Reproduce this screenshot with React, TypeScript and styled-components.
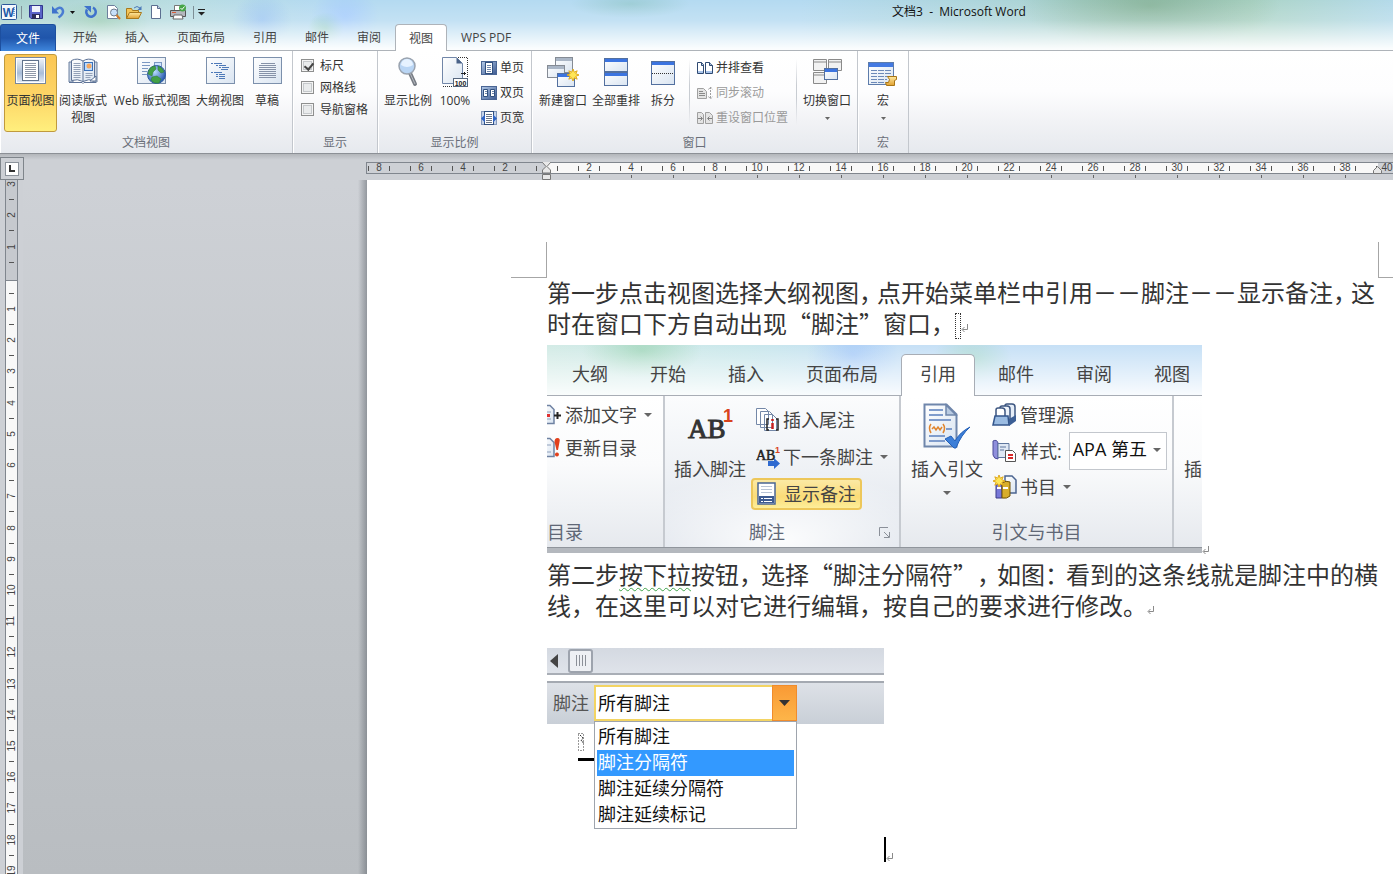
import React from "react";
import styled, { createGlobalStyle, css } from "styled-components";

const Global = createGlobalStyle`
  * { box-sizing: border-box; }
  html, body { margin: 0; height: 100%; overflow: hidden; }
  body {
    font-family: "Open Sans", "Noto Sans CJK SC", sans-serif;
    font-size: 12px;
    line-height: 17px;
    color: #333;
  }
  button, select, input { font: inherit; color: inherit; margin: 0; }
  button { border: 0; background: none; padding: 0; white-space: nowrap; }
  ul { margin: 0; padding: 0; list-style: none; }
  p { margin: 0; }
  svg { display: block; flex: none; }
`;

/* ---------- window frame ---------- */

const Window = styled.div`
  height: 100vh;
  display: flex;
  flex-direction: column;
  overflow: hidden;
`;

const Header = styled.header`
  background:
    linear-gradient(to bottom, rgba(255, 255, 255, 0) 0, rgba(255, 255, 255, 0.2) 40%, rgba(255, 255, 255, 0.95) 96%),
    radial-gradient(ellipse 50px 22px at 100px 22px, rgba(140, 196, 160, 0.6), transparent),
    radial-gradient(ellipse 30px 26px at 262px 20px, rgba(140, 185, 245, 0.6), transparent),
    radial-gradient(ellipse 34px 28px at 345px 16px, rgba(160, 200, 255, 0.8), transparent),
    radial-gradient(ellipse 18px 16px at 326px 28px, rgba(130, 200, 150, 0.6), transparent),
    radial-gradient(ellipse 60px 14px at 630px 4px, rgba(140, 195, 195, 0.6), transparent),
    radial-gradient(ellipse 130px 44px at 1150px 6px, rgba(134, 178, 152, 0.9), transparent),
    linear-gradient(to right, #a8d2cd 0, #b9dde2 180px, #b4daf1 320px, #b4daf1 800px, #a9d2cf 1080px, #acd4c6 1250px, #b4daea 100%);
`;

const TitleBar = styled.div`
  height: 24px;
  display: flex;
  align-items: center;
`;

const QuickBar = styled.div`
  display: flex;
  align-items: center;
  padding-left: 1px;
`;

const QuickButton = styled.button<{ $w?: number }>`
  width: ${(p) => p.$w ?? 22}px;
  height: 22px;
  display: flex;
  align-items: center;
  justify-content: center;
`;

const QuickDivider = styled.span`
  width: 1px;
  height: 13px;
  margin: 0 3px;
  background: #7d8f96;
`;

const Title = styled.h1`
  flex: 1;
  margin: 0;
  padding-left: 320px;
  font-size: 12px;
  font-weight: 400;
  line-height: 24px;
  text-align: center;
  color: #111;
`;

const Tabs = styled.nav`
  display: flex;
  height: 27px;
  box-shadow: inset 0 -1px #aeb3b9;
`;

const Tab = styled.button<{ $active?: boolean }>`
  height: 27px;
  padding: 0 14px;
  color: #444;
  ${(p) =>
    p.$active &&
    css`
      padding: 0 13px;
      background: #fff;
      border: 1px solid #aeb3b9;
      border-bottom: 0;
      border-radius: 4px 4px 0 0;
    `}
`;

const FileTab = styled.button`
  width: 56px;
  height: 27px;
  margin-right: 3px;
  color: #fff;
  border: 1px solid #1d4f9f;
  border-bottom: 0;
  border-radius: 3px 3px 0 0;
  background: linear-gradient(#2a62b4, #1f55ab 50%, #3f86dc);
`;

/* ---------- ribbon ---------- */

const Ribbon = styled.div`
  display: flex;
  height: 103px;
  background: linear-gradient(#fff 0, #fdfdfe 40%, #f1f2f5 70%, #e6e9ee);
  border-bottom: 1px solid #8c9096;
`;

const Group = styled.section<{ $w: number }>`
  width: ${(p) => p.$w}px;
  flex: none;
  display: flex;
  flex-direction: column;
  border-right: 1px solid #c3c7cd;
  box-shadow: inset 1px 0 #fff;
`;

const GroupBody = styled.div<{ $pl?: number }>`
  flex: 1;
  display: flex;
  padding: 3px 0 0 ${(p) => p.$pl ?? 4}px;
`;

const GroupLabel = styled.div`
  height: 20px;
  line-height: 20px;
  text-align: center;
  color: #6a6f79;
`;

const BigButton = styled.button<{ $w?: number; $active?: boolean }>`
  width: ${(p) => p.$w ?? 52}px;
  height: 78px;
  flex: none;
  display: flex;
  flex-direction: column;
  align-items: center;
  border-radius: 3px;
  border: 1px solid transparent;
  > svg { margin-top: 8px; }
  ${(p) =>
    p.$active &&
    css`
      border-color: #c09a3e;
      background: linear-gradient(#fbc653 0, #fdd567 55%, #ffef7d);
    `}
`;

const IconBox = styled.span`
  height: 37px;
  padding-top: 2px;
  display: flex;
  align-items: flex-start;
  justify-content: center;
`;

const SmallList = styled.div<{ $pt?: number }>`
  display: flex;
  flex-direction: column;
  padding: ${(p) => p.$pt ?? 1}px 0 0 5px;
`;

const SmallButton = styled.button`
  height: 25px;
  display: flex;
  align-items: center;
  gap: 3px;
  &:disabled { color: #9a9a9a; }
`;

const Divider = styled.span<{ $m: string }>`
  width: 1px;
  height: 66px;
  margin: ${(p) => p.$m};
  background: linear-gradient(transparent, #c8ccd2 40%, #c8ccd2 60%, transparent);
`;

const CheckRow = styled.label`
  display: flex;
  align-items: center;
  gap: 6px;
  height: 22px;
`;

const Check = styled.input`
  appearance: none;
  position: relative;
  width: 13px;
  height: 13px;
  border: 1px solid #8e8f8f;
  box-shadow: inset 0 0 0 1px #f4f4f4, inset 0 0 0 2px #c5c8cb;
  background: #e9ebec;
  &:checked::after {
    content: "";
    position: absolute;
    left: 4px;
    top: 1px;
    width: 4px;
    height: 7px;
    border: solid #444;
    border-width: 0 2px 2px 0;
    transform: rotate(40deg);
  }
`;

/* ---------- rulers and canvas ---------- */

const Workspace = styled.main`
  flex: 1;
  min-height: 0;
  display: flex;
  flex-direction: column;
  background: linear-gradient(#cfd2d7, #c3c7cb 50%, #b9bdc1);
`;

const RulerRow = styled.div`
  height: 26px;
  flex: none;
  display: flex;
  background: linear-gradient(#b3b6ba 0, #cdd0d5 6px);
`;

const Corner = styled.button`
  width: 24px;
  height: 23px;
  margin-top: 3px;
  flex: none;
  display: flex;
  align-items: center;
  justify-content: center;
  border: 1px solid #7f858b;
  background: #cdd0d5;
`;

const CornerFace = styled.span`
  width: 14px;
  height: 14px;
  display: flex;
  align-items: center;
  justify-content: center;
  border: 1px solid #8c939b;
  background: #fff;
`;

const HRuler = styled.div`
  position: relative;
  flex: 1;
  margin: 8px 0 0 342px;
  overflow: hidden;
`;

const HTrack = styled.div`
  display: flex;
  height: 12px;
  border: 1px solid #80868e;
  border-right: 0;
`;

const HZone = styled.span<{ $w?: number }>`
  flex: ${(p) => (p.$w ? `0 0 ${p.$w}px` : "1")};
  background: ${(p) => (p.$w && p.$w > 200 ? "#f8f8f8" : "#cdd0d5")};
`;

const HScale = styled.div`
  position: absolute;
  left: -8px;
  top: 0;
  display: flex;
`;

const HCell = styled.span<{ $sub?: boolean }>`
  position: relative;
  width: 42px;
  flex: none;
  height: 18px;
  display: grid;
  grid-template-columns: 10px 1px 20px 1px 10px;
  font: 10px/12px "Liberation Sans", sans-serif;
  text-align: center;
  color: #444;
  i { height: 5px; margin-top: 4px; background: #555; }
  b { font-weight: 400; }
  &::after {
    content: "";
    position: absolute;
    left: 21px;
    top: 13px;
    width: 1px;
    height: 3px;
    background: ${(p) => (p.$sub ? "#666" : "transparent")};
  }
`;

const Marker = styled.span<{ $x: number; $y: number }>`
  position: absolute;
  left: ${(p) => p.$x}px;
  top: ${(p) => p.$y}px;
`;

const Body = styled.div`
  flex: 1;
  min-height: 0;
  display: flex;
`;

const VRuler = styled.div`
  width: 23px;
  flex: none;
  padding-left: 5px;
  overflow: hidden;
  background: #cdd0d5;
`;

const VTrack = styled.div`
  width: 13px;
  height: 100%;
  overflow: hidden;
  border: solid #80868e;
  border-width: 0 1px;
  background: linear-gradient(#c6c9ce 100px, #80868e 100px, #80868e 101px, #f8f8f8 101px);
`;

const VScale = styled.div`
  height: 718px;
  margin-top: -11px;
  display: flex;
  flex-direction: column;
`;

const VCell = styled.span`
  flex: 1;
  display: flex;
  flex-direction: column;
  align-items: center;
  font: 10px/12px "Liberation Sans", sans-serif;
  color: #444;
  b {
    flex: 1;
    display: flex;
    align-items: center;
    font-weight: 400;
  }
  b span { transform: rotate(-90deg); }
  i { width: 5px; height: 1px; flex: none; background: #555; }
`;

const PageEdge = styled.div`
  flex: 1;
  min-width: 0;
  padding-left: 344px;
  background: linear-gradient(to right, transparent 335px, rgba(90, 96, 104, 0.5) 344px) no-repeat;
`;

const Page = styled.article`
  height: 100%;
  padding-top: 62px;
  overflow: hidden;
  background: #fff;
`;

const CropRow = styled.div`
  display: flex;
  gap: 831px;
  height: 34px;
  margin-left: 144px;
`;

const Crop = styled.span<{ $side: "left" | "right" }>`
  width: 36px;
  height: 36px;
  flex: none;
  border: solid #a6a6a6;
  border-width: ${(p) => (p.$side === "left" ? "0 1px 1px 0" : "0 0 1px 1px")};
`;

const TextColumn = styled.div`
  width: 840px;
  margin-left: 180px;
`;

const Para = styled.p`
  font: 24px/31px "Noto Sans CJK SC", sans-serif;
  text-spacing-trim: space-all;
  white-space: nowrap;
  color: #333;
`;

/* half-width punctuation followed by its own share of the line's slack */
const Tight = styled.span<{ $pad: number }>`
  font-feature-settings: "halt";
  padding-right: ${(p) => p.$pad}px;
`;

const Wavy = styled.span`
  text-decoration: underline wavy #3fa34a 1px;
  text-underline-offset: 3px;
`;

const NoteRef = styled.span`
  display: inline-block;
  width: 6px;
  height: 26px;
  vertical-align: middle;
  border: 1px dotted #333;
`;

const Mark = styled.svg`
  display: inline-block;
`;

/* ---------- first picture: references ribbon ---------- */

const Shot = styled.figure`
  width: 655px;
  height: 208px;
  margin: 6px 0 5px;
  display: flex;
  font-size: 18px;
  line-height: 24px;
  color: #444;
`;

const ShotFrame = styled.div`
  width: 655px;
  flex: none;
  overflow: hidden;
  border-bottom: 5px solid #b4b8be;
`;

const ShotEnd = styled.span`
  align-self: flex-end;
  line-height: 10px;
  height: 10px;
`;

const ShotTabs = styled.div`
  height: 51px;
  padding: 9px 0 0 4px;
  display: flex;
  background:
    linear-gradient(to bottom, rgba(255, 255, 255, 0) 0, rgba(255, 255, 255, 0.9)),
    radial-gradient(ellipse 60px 28px at 95px 6px, rgba(140, 205, 165, 0.6), transparent),
    radial-gradient(ellipse 46px 36px at 306px 10px, rgba(150, 190, 250, 0.6), transparent),
    radial-gradient(ellipse 40px 26px at 425px 14px, rgba(160, 215, 190, 0.6), transparent),
    linear-gradient(to right, #d3ebe6 0, #cbe8ec 200px, #c6e0f6 340px, #c6e0f6 100%);
  box-shadow: inset 0 -1px #a8adb5;
`;

const ShotTab = styled.button<{ $active?: boolean }>`
  height: 42px;
  padding: 0 21px 3px;
  flex: none;
  ${(p) =>
    p.$active &&
    css`
      margin: 0 2px;
      padding: 0 18px 4px;
      background: #fff;
      border: 1px solid #a8adb5;
      border-bottom: 0;
      border-radius: 5px 5px 0 0;
    `}
`;

const ShotRibbon = styled.div`
  height: 152px;
  display: flex;
  background: linear-gradient(#fff, #fafbfc 45%, #e6e9ee);
  border-bottom: 1px solid #90959c;
`;

const ShotGroup = styled.section<{ $w: number; $tint?: boolean }>`
  width: ${(p) => p.$w}px;
  flex: none;
  display: flex;
  flex-direction: column;
  border-right: 2px solid #c6cad0;
  ${(p) =>
    p.$tint &&
    css`
      background: radial-gradient(ellipse 160px 70px at 50% 95%, rgba(255, 255, 255, 0.9), transparent),
        linear-gradient(#fbfcfd, #eef1f5 50%, #dfe4ec);
    `}
`;

const ShotBody = styled.div<{ $pl?: number }>`
  height: 124px;
  display: flex;
  padding-left: ${(p) => p.$pl ?? 0}px;
`;

const ShotLabel = styled.div<{ $start?: boolean; $pr?: number }>`
  position: relative;
  padding-right: ${(p) => p.$pr ?? 0}px;
  text-align: ${(p) => (p.$start ? "left" : "center")};
  color: #606776;
`;

const Launcher = styled.button`
  position: absolute;
  right: 8px;
  top: 7px;
`;

const ShotBig = styled.button<{ $w: number }>`
  width: ${(p) => p.$w}px;
  flex: none;
  padding-top: 7px;
  display: flex;
  flex-direction: column;
  align-items: center;
  > svg { margin-top: 10px; }
`;

const ShotIcon = styled.span`
  height: 54px;
`;

const ShotList = styled.div<{ $row: number; $pt: number; $pl?: number }>`
  padding: ${(p) => p.$pt}px 0 0 ${(p) => p.$pl ?? 0}px;
  display: grid;
  align-content: start;
  justify-items: start;
  grid-auto-rows: ${(p) => p.$row}px;
`;

const ShotItem = styled.button<{ $active?: boolean }>`
  height: 32px;
  align-self: center;
  display: flex;
  align-items: center;
  gap: 3px;
  padding: 0 3px;
  border: 2px solid transparent;
  border-radius: 4px;
  > svg:last-child:not(:first-child) { margin-left: 4px; }
  ${(p) =>
    p.$active &&
    css`
      gap: 7px;
      padding: 0 4px;
      border-color: #edc75a;
      background: linear-gradient(#fbe9a4, #fbdc78 60%, #fdee9a);
    `}
`;

const ClipItem = styled.button`
  height: 32px;
  display: flex;
  align-items: center;
  gap: 4px;
  svg:last-child:not(:first-child) { margin-left: 3px; }
`;

const StyleField = styled.label`
  display: flex;
  align-items: center;
  gap: 4px;
  height: 36px;
  padding-left: 5px;
  white-space: nowrap;
`;

const StyleWrap = styled.span`
  position: relative;
  margin-left: 3px;
  svg { position: absolute; right: 6px; top: 16px; }
`;

const StyleSelect = styled.select`
  appearance: none;
  display: block;
  width: 98px;
  height: 38px;
  padding: 0 16px 4px 3px;
  border: 1px solid #c3c7cd;
  border-radius: 0;
  background: #fff;
  color: #111;
`;

/* ---------- second picture: footnote pane ---------- */

const PaneRow = styled.div`
  display: flex;
  align-items: flex-end;
  margin-top: 28px;
`;

const Pane = styled.figure`
  width: 337px;
  height: 214px;
  margin: 0;
  font-size: 18px;
  line-height: 24px;
`;

const ScrollStrip = styled.div`
  height: 27px;
  display: flex;
  align-items: center;
  gap: 10px;
  padding-left: 3px;
  background: linear-gradient(#d4d9e1, #dfe3ea);
  border-bottom: 2px solid #a9aeb6;
`;

const Thumb = styled.button`
  width: 25px;
  height: 24px;
  display: flex;
  align-items: center;
  justify-content: center;
  gap: 2px;
  border: 2px solid #9da3ad;
  border-radius: 3px;
  background: #eef0f4;
  i { width: 1px; height: 11px; background: #8c9098; }
`;

const PaneBar = styled.div`
  height: 43px;
  margin-top: 6px;
  padding: 2px 0 0 6px;
  display: flex;
  gap: 5px;
  border-top: 2px solid #a4a9b1;
  background: linear-gradient(#dde1e7, #c9cfd7);
`;

const PaneLabel = styled.label`
  line-height: 36px;
  color: #555;
`;

const Combo = styled.div`
  position: relative;
  width: 203px;
`;

const ComboSelect = styled.select`
  appearance: none;
  display: block;
  width: 203px;
  height: 36px;
  padding: 0 28px 0 2px;
  border: 2px solid #f3d463;
  border-radius: 0;
  color: #111;
  background: #fff;
`;

const ComboArrow = styled.span`
  position: absolute;
  right: 0;
  top: 0;
  width: 25px;
  height: 36px;
  display: flex;
  align-items: center;
  justify-content: center;
  border: 1px solid #f08c2c;
  background: linear-gradient(#f99a35, #fdb549);
`;

const Menu = styled.ul`
  position: absolute;
  left: 0;
  top: 36px;
  width: 203px;
  padding: 2px 2px 0;
  border: 1px solid #9ea4ad;
  background: #fff;
  color: #111;
`;

const MenuItem = styled.li<{ $selected?: boolean }>`
  height: 26px;
  padding-left: 1px;
  line-height: 25px;
  background: ${(p) => (p.$selected ? "#3399ff" : "transparent")};
  color: ${(p) => (p.$selected ? "#fff" : "inherit")};
`;

const PaneText = styled.div`
  padding: 9px 0 0 31px;
`;

const Separator = styled.div`
  width: 16px;
  height: 3px;
  margin-top: 7px;
  background: #000;
`;

const Caret = styled.span`
  width: 2px;
  height: 25px;
  background: #000;
`;

/* ---------- icons ---------- */

const Arrow = ({ size = 5, color = "#666" }: { size?: number; color?: string }) => (
  <svg width={size} height={Math.ceil(size / 2)} viewBox="0 0 10 5" preserveAspectRatio="none">
    <path d="M0 0h10L5 5z" fill={color} />
  </svg>
);

const ParaMark = () => (
  <Mark width="8" height="9" viewBox="0 0 8 9" fill="none" stroke="#8a8a8a">
    <path d="M6.500 0v5.500H1.500M3.500 3L1 5.500 3.500 8" />
  </Mark>
);

const HiddenSvg = styled.svg`
  position: absolute;
`;

const Defs = () => (
  <HiddenSvg width="0" height="0">
    <defs>
      <linearGradient id="paper" x1="0" y1="0" x2="1" y2="1">
        <stop offset="0" stopColor="#fff" />
        <stop offset="1" stopColor="#d9e4f1" />
      </linearGradient>
      <linearGradient id="steel" x1="0" y1="0" x2="1" y2="1">
        <stop offset="0" stopColor="#b4cae8" />
        <stop offset="1" stopColor="#3a5890" />
      </linearGradient>
      <linearGradient id="gold" x1="0" y1="0" x2="0" y2="1">
        <stop offset="0" stopColor="#ffe9a0" />
        <stop offset="1" stopColor="#e0a030" />
      </linearGradient>
      <linearGradient id="frame" x1="0" y1="0" x2="0" y2="1">
        <stop offset="0" stopColor="#f4f7fb" />
        <stop offset=".6" stopColor="#a9bdd8" />
        <stop offset="1" stopColor="#e8eff8" />
      </linearGradient>
      <radialGradient id="globe" cx=".4" cy=".35" r=".7">
        <stop offset="0" stopColor="#b8dcff" />
        <stop offset="1" stopColor="#1c4fa8" />
      </radialGradient>
    </defs>
  </HiddenSvg>
);

const PrintLayoutIcon = () => (
  <svg width="31" height="28" viewBox="0 0 31 28">
    <rect x=".5" y=".5" width="30" height="26" fill="url(#frame)" stroke="#7788a0" />
    <rect x="1.500" y="1.500" width="28" height="24" fill="none" stroke="#fff" />
    <rect x="7.500" y="3.500" width="16" height="20" fill="#fff" stroke="#60728c" />
    <path d="M10 6.500h11M10 8.500h11M10 10.500h11M10 12.500h11M10 14.500h11M10 16.500h11M10 18.500h11M10 20.500h11" stroke="#8f98a8" />
  </svg>
);

const ReadingIcon = () => (
  <svg width="30" height="28" viewBox="0 0 30 28">
    <path d="M1 5h4v20H1zM25 5h4v20h-4z" fill="#cdd8e6" stroke="#6c80a0" />
    <path d="M3.500 3.500q6-3 11.500.500 5-3.500 11.500-.500v20q-6-2-11.500 1-5.500-3-11.500-1z" fill="url(#paper)" stroke="#5d7296" />
    <path d="M15 4v21" stroke="#5d7296" />
    <path d="M5.500 6.500h7M5.500 8.500h7M5.500 10.500h7M5.500 12.500h7M5.500 14.500h7M5.500 16.500h7M5.500 18.500h7M5.500 20.500h7M17.500 16.500h7M17.500 18.500h7M17.500 20.500h5" stroke="#93a1b8" />
    <rect x="16.500" y="5.500" width="8" height="8" fill="#bcdcff" stroke="#3b70b8" />
    <circle cx="21" cy="9" r="2.500" fill="#f5a860" />
    <path d="M1 25.500h13l1 1 1-1h12" fill="none" stroke="#5d7296" />
    <path d="M22 24l6-5v5z" fill="#fff" stroke="#5d7296" />
  </svg>
);

const WebIcon = () => (
  <svg width="30" height="29" viewBox="0 0 30 29">
    <rect x=".5" y=".5" width="28" height="26" fill="url(#paper)" stroke="#7c90ac" />
    <path d="M5 5.500h8M5 8.500h8M5 11.500h6M5 14.500h5M5 17.500h5" stroke="#7b98c2" />
    <rect x="17.500" y="5.500" width="7" height="5" fill="#cfe4ff" stroke="#7b98c2" />
    <circle cx="19.500" cy="17.500" r="9" fill="url(#globe)" stroke="#2c5aa0" />
    <path d="M12 13q2-4 6-4l1 3-3 3-1 4-4-2zM21 9q5 2 6 6l-3 1-3-3zM15 20l5-1 4 3-2 4q-5 1-8-3z" fill="#43a047" stroke="#2e7d32" strokeWidth=".5" />
  </svg>
);

const OutlineIcon = () => (
  <svg width="29" height="28" viewBox="0 0 29 28">
    <rect x=".5" y=".5" width="28" height="26" fill="url(#paper)" stroke="#7c90ac" />
    <path d="M5 6.500h2M8 6.500h8M10 8.500h2M13 8.500h7M13 10.500h2M16 10.500h7M15 12.500h7M5 15.500h2M8 15.500h8M10 17.500h2M13 17.500h6M10 19.500h2M13 19.500h6M13 21.500h6" stroke="#4d79b8" />
  </svg>
);

const DraftIcon = () => (
  <svg width="29" height="28" viewBox="0 0 29 28">
    <rect x=".5" y=".5" width="28" height="26" fill="url(#paper)" stroke="#7c90ac" />
    <path d="M8 6.500h14M6 8.500h17M6 10.500h17M6 12.500h17M6 14.500h17M6 16.500h17M6 18.500h17M6 20.500h17" stroke="#8692a8" />
  </svg>
);

const MagnifierIcon = () => (
  <svg width="21" height="30" viewBox="0 0 21 30">
    <path d="M12 16l5 11" stroke="#777c84" strokeWidth="4" strokeLinecap="round" />
    <path d="M12 16l5 11" stroke="#b5b9c0" strokeWidth="1" />
    <circle cx="9" cy="9" r="8" fill="#b9d5f4" stroke="#9aa3af" strokeWidth="1.500" />
    <path d="M3 8a6 6 0 0 1 12 0q-6 4-12 0z" fill="#e6f2ff" />
  </svg>
);

const HundredIcon = () => (
  <svg width="26" height="31" viewBox="0 0 26 31">
    <path d="M.5.5h14l6 6v20H.5z" fill="url(#paper)" stroke="#7186a8" />
    <path d="M14.500.5v6h6z" fill="#4a6288" />
    <path d="M16 .5h9.500V22M1 29.500h10" fill="none" stroke="#333" strokeDasharray="1 1" />
    <path d="M19 16.500h5M22.500 15v3" stroke="#222" />
    <rect x="11.500" y="21.500" width="14" height="8" fill="#fff" stroke="#56667e" />
    <text x="18.500" y="28.500" fontSize="7" fontWeight="700" textAnchor="middle" fill="#222" fontFamily="Liberation Sans">100</text>
  </svg>
);

const PageCountIcon = ({ kind }: { kind: "one" | "two" | "width" }) => (
  <svg width="16" height="16" viewBox="0 0 16 16">
    {kind !== "width" && <rect x=".5" y="1.500" width="15" height="13" fill="url(#steel)" stroke="#4a6594" />}
    {kind === "one" && (
      <>
        <rect x="4.500" y="2.500" width="7" height="11" fill="#fff" stroke="#31507f" />
        <path d="M6 5.500h4M6 7.500h4M6 9.500h4M6 11.500h4" stroke="#6f86ab" />
      </>
    )}
    {kind === "two" && (
      <>
        <path d="M2.500 4.500h4v7h-4zM9.500 4.500h4v7h-4z" fill="#fff" stroke="#31507f" />
        <path d="M4 6.500h2M4 8.500h2M11 6.500h2M11 8.500h2" stroke="#6f86ab" />
      </>
    )}
    {kind === "width" && (
      <>
        <rect x=".5" y="1.500" width="15" height="13" fill="#c5d4ea" stroke="#8498bb" />
        <rect x="3.500" y="1.500" width="9" height="13" fill="#fff" stroke="#31507f" />
        <path d="M5 4.500h6M5 6.500h6M5 8.500h6M5 10.500h6M5 12.500h6" stroke="#6b7587" />
        <path d="M0 8.500l4-4v8zM16 8.500l-4-4v8z" fill="#2f64c4" />
      </>
    )}
  </svg>
);

const Win = ({ x, y, w, h, gray }: { x: number; y: number; w: number; h: number; gray?: boolean }) => (
  <g>
    <rect x={x + 0.5} y={y + 0.5} width={w} height={h} fill="url(#paper)" stroke={gray ? "#858b94" : "#53709f"} />
    <rect x={x + 1} y={y + 1} width={w - 1} height="3" fill={gray ? "#aab6c6" : "#3c74e0"} />
  </g>
);

const Spark = ({ x, y }: { x: number; y: number }) => (
  <path
    transform={`translate(${x} ${y})`}
    d="M0-6l1.300 3.200L4.200-4.200 2.800-1.300 6 0 2.800 1.300 4.200 4.200 1.300 2.800 0 6l-1.300-3.200L-4.200 4.200l1.400-2.900L-6 0l3.200-1.300-1.400-2.900 2.900 1.400z"
    fill="#ffe657"
    stroke="#e0a91c"
  />
);

const NewWindowIcon = () => (
  <svg width="32" height="31" viewBox="0 0 32 31">
    <Win x={8} y={0} w={17} h={15} gray />
    <Win x={0} y={8} w={17} h={12} gray />
    <Win x={10} y={16} w={17} h={13} />
    <Spark x={26} y={18} />
  </svg>
);

const ArrangeIcon = () => (
  <svg width="24" height="30" viewBox="0 0 24 30">
    <Win x={0} y={1} w={23} h={13} />
    <Win x={0} y={15} w={23} h={13} />
  </svg>
);

const SplitIcon = () => (
  <svg width="24" height="30" viewBox="0 0 24 30">
    <Win x={0} y={4} w={23} h={23} />
    <path d="M1 16.500h22" stroke="#333" strokeDasharray="1 1" />
  </svg>
);

const GrayWin = ({ x, y }: { x: number; y: number }) => (
  <path d={`M${x + 0.5} ${y + 0.5}h13v11h-13zM${x + 1} ${y + 3}h12`} fill="#f2f2f2" stroke="#8a8a8a" />
);

const SwitchIcon = () => (
  <svg width="29" height="30" viewBox="0 0 29 30">
    <GrayWin x={0} y={2} />
    <GrayWin x={15} y={2} />
    <GrayWin x={0} y={15} />
    <Win x={11} y={11} w={13} h={11} />
  </svg>
);

const MacroIcon = () => (
  <svg width="30" height="30" viewBox="0 0 30 30">
    <rect x=".5" y="5.500" width="25" height="22" fill="url(#paper)" stroke="#5d7cab" />
    <rect x="1" y="6" width="24" height="4" fill="#4379e2" />
    <path d="M3 13.500h20M3 16.500h20M3 19.500h20M3 22.500h16M3 25.500h14" stroke="#6c89b8" strokeDasharray="6 1" />
    <path d="M19.500 19.500h9v3l-2 1v5h-8l-1-3h3l1-3z" fill="url(#gold)" stroke="#a87516" />
  </svg>
);

const SideIcon = () => (
  <svg width="16" height="14" viewBox="0 0 16 14">
    <path d="M.5 1.500h4l2 2v9h-6zM8.500 1.500h4l3 3v8h-7z" fill="#fff" stroke="#2f4a72" />
    <path d="M4.500 1.500v3h2M12.500 1.500v3h3" stroke="#2f4a72" fill="#a6bddb" />
    <path d="M1 11h5M9 11h6" stroke="#a9c4ea" strokeWidth="2" />
  </svg>
);

const SyncIcon = () => (
  <svg width="16" height="14" viewBox="0 0 16 14" fill="none" stroke="#a0a0a0">
    <path d="M.5 2.500h6l3 3v7h-9z" fill="#e4e4e4" />
    <path d="M2 5.500h4M2 7.500h6M2 9.500h6" stroke="#8a8a8a" />
    <path d="M13.500 1v12M11.500 3.500l2-2.500 2 2.500M11.500 10.500l2 2.500 2-2.500" strokeDasharray="2 1" />
  </svg>
);

const ResetIcon = () => (
  <svg width="16" height="14" viewBox="0 0 16 14" fill="#e4e4e4" stroke="#a0a0a0">
    <path d="M.5 1.500h4l2 2v9h-6zM8.500 1.500h4l3 3v8h-7z" />
    <path d="M1 7.500h4M3.500 5.500l2 2-2 2M15 7.500h-4M12.500 5.500l-2 2 2 2" stroke="#808080" fill="none" />
  </svg>
);

const WordIcon = () => (
  <svg width="17" height="17" viewBox="0 0 17 17">
    <rect x=".5" y=".5" width="15" height="15" rx="1" fill="#f4f8fd" stroke="#2b579a" />
    <path d="M13 3v10" stroke="#7d9dcc" strokeWidth="2" strokeDasharray="1 1" />
    <text x="7.500" y="12.500" fontSize="12" fontWeight="700" textAnchor="middle" fill="#1e5aa8" fontFamily="Liberation Sans">W</text>
  </svg>
);

const SaveIcon = () => (
  <svg width="14" height="14" viewBox="0 0 14 14">
    <path d="M.5.5h13v13H2l-1.500-1.500z" fill="#5a64c8" stroke="#31368c" />
    <rect x="3" y="1" width="8" height="6" fill="#eef2fb" />
    <rect x="3" y="9" width="8" height="5" fill="#2b2f5c" />
    <rect x="7" y="10" width="3" height="3" fill="#fff" />
  </svg>
);

const UndoIcon = () => (
  <svg width="13" height="14" viewBox="0 0 13 14" fill="none">
    <path d="M3 5.500q5-5 7.500-1 2 4-4 8" stroke="#4a7cd2" strokeWidth="2.500" />
    <path d="M0 1v7.500h7z" fill="#3f72cc" />
  </svg>
);

const RedoIcon = () => (
  <svg width="13" height="14" viewBox="0 0 13 14" fill="none">
    <path d="M3 4.500a4.700 4.700 0 1 0 6-1.800" stroke="#3f72cc" strokeWidth="2.500" />
    <path d="M0 1h7v6.500z" fill="#3f72cc" />
  </svg>
);

const PreviewIcon = () => (
  <svg width="15" height="15" viewBox="0 0 15 15">
    <path d="M1.500.5h7l3 3v10h-10z" fill="#fff" stroke="#6d7f9c" />
    <circle cx="8" cy="7.500" r="3.500" fill="#c7e0fa" stroke="#6f7c8e" />
    <path d="M10.500 10l3.500 4" stroke="#d07a2c" strokeWidth="2" />
  </svg>
);

const OpenIcon = () => (
  <svg width="17" height="15" viewBox="0 0 17 15">
    <path d="M.5 13.500v-10h5l1 2h6v8z" fill="#f3c558" stroke="#a8781c" />
    <path d="M.5 13.500l3-6h12l-3 6z" fill="url(#gold)" stroke="#a8781c" />
    <path d="M8 3q3-3 6 0" stroke="#4b79b8" fill="none" />
    <path d="M15.500 1v4h-4z" fill="#4b79b8" />
  </svg>
);

const NewIcon = () => (
  <svg width="12" height="14" viewBox="0 0 12 14">
    <path d="M1.500.5h6l3 3v10h-9z" fill="#fff" stroke="#5c6f90" />
    <path d="M7.500.5v3h3" fill="#cbd8ea" stroke="#5c6f90" />
  </svg>
);

const PrinterIcon = () => (
  <svg width="17" height="16" viewBox="0 0 17 16">
    <path d="M4.500 1.500h8v5h-8z" fill="#fff" stroke="#777" />
    <path d="M.5 6.500h15v6H.5z" fill="#b4b7bd" stroke="#555" />
    <path d="M4 11h8l1 4H3z" fill="#fff" stroke="#666" />
    <path d="M2 8.500h4" stroke="#d95d3a" />
    <circle cx="12.500" cy="4" r="3.500" fill="#46a648" />
    <path d="M10.500 4l1.500 1.500 2.500-3" stroke="#fff" fill="none" />
  </svg>
);

const CustomizeIcon = () => (
  <svg width="7" height="7" viewBox="0 0 7 7">
    <path d="M0 .5h7" stroke="#222" />
    <path d="M0 3h7L3.500 6.500z" fill="#222" />
  </svg>
);

const HourGlass = () => (
  <svg width="9" height="21" viewBox="0 0 9 21" fill="#e8e8e8" stroke="#777">
    <path d="M.5.5h8v3l-3.500 4 3.500 3.500v3h-8v-3L4 7.500.5 3.500z" />
    <path d="M.5 15.500h8v5h-8z" />
  </svg>
);

const RightIndent = () => (
  <svg width="9" height="8" viewBox="0 0 9 8" fill="#e8e8e8" stroke="#777">
    <path d="M4.500.5l4 4v3h-8v-3z" />
  </svg>
);

const ClippedDoc = ({ bang }: { bang?: boolean }) => (
  <svg width="14" height="22" viewBox="0 0 14 22">
    <path d="M-4 1.500h7l4 4v14h-11z" fill="url(#paper)" stroke="#6f82a2" strokeWidth="1.500" />
    <path d="M0 8h4M0 15h4" stroke="#8fa0bb" />
    {bang ? (
      <path d="M10.500 1q3 0 2 4l-1.500 8h-1.500L7.500 5q0-4 3-4zM10 15.500a2 2 0 1 1-.1 0z" fill="#e2401c" />
    ) : (
      <>
        <path d="M0 11.500h3" stroke="#e03030" strokeWidth="3" />
        <path d="M7 11.500h7M10.500 8v7" stroke="#222" strokeWidth="2" />
      </>
    )}
  </svg>
);

const FootnoteIcon = () => (
  <svg width="46" height="40" viewBox="0 0 46 40">
    <text x="1" y="35" fontSize="27" fontFamily="Liberation Serif" fill="#333" stroke="#333">AB</text>
    <text x="36" y="19" fontSize="18" fontWeight="700" fontFamily="Liberation Sans" fill="#d8431e">1</text>
  </svg>
);

const EndnoteIcon = () => (
  <svg width="24" height="24" viewBox="0 0 24 24">
    <path d="M.5.5h9l3 3v13H.500zM4.500 3.500h9l3 3v13h-12zM8.500 6.500h8l4 4v12h-12z" fill="#fff" stroke="#7488a8" />
    <path d="M13 11h-2v11h2M20 11h2v11h-2" fill="none" stroke="#222" strokeWidth="1.500" />
    <path d="M16.500 11v2M16.500 15v6" stroke="#c82020" strokeWidth="2.500" />
  </svg>
);

const NextNoteIcon = () => (
  <svg width="24" height="24" viewBox="0 0 24 24">
    <text x="0" y="15" fontSize="14" fontFamily="Liberation Serif" fill="#222" stroke="#222" strokeWidth=".5">AB</text>
    <text x="19" y="8" fontSize="9" fontWeight="700" fontFamily="Liberation Sans" fill="#d8431e">1</text>
    <path d="M12 16h6v-3l6 5.500-6 5.500v-3h-6z" fill="#2f6ad0" />
  </svg>
);

const NotesIcon = () => (
  <svg width="20" height="23" viewBox="0 0 20 23">
    <rect x="1" y="1" width="17" height="21" fill="#fff" stroke="#4a6594" strokeWidth="1.500" />
    <path d="M4 4.500h11M4 7.500h11M4 10.500h11" stroke="#b9c4d6" />
    <rect x="2" y="14" width="15" height="7" fill="#3e5b90" />
    <path d="M4 16.500h2M7 16.500h8M4 19.500h2M7 19.500h8" stroke="#fff" />
  </svg>
);

const CitationIcon = () => (
  <svg width="48" height="48" viewBox="0 0 48 48">
    <path d="M1.500 1.500h22l10 10v32h-32z" fill="url(#paper)" stroke="#6f86ab" strokeWidth="2" />
    <path d="M23 2v10h10z" fill="#b9cbe2" stroke="#6f86ab" strokeWidth="1.500" />
    <path d="M6 7h14M6 12h14M6 17h22M6 33h16M6 38h16M23 26h6" stroke="#7f9ccc" strokeWidth="2" />
    <path d="M8 21q-3 4 0 9M20 21q3 4 0 9M9 26l2-2 2 3 2-3 2 3 2-3" fill="none" stroke="#e0852e" strokeWidth="1.500" />
    <path d="M22 36l6-3 4 5q5-9 15-14-9 8-14 21h-2z" fill="#3d7fd8" stroke="#2460b8" />
  </svg>
);

const SourcesIcon = () => (
  <svg width="25" height="24" viewBox="0 0 25 24">
    <path d="M13 3q0-2 2-2h5q3 0 3 3v12H13z" fill="#e6eef8" stroke="#3d5680" strokeWidth="1.500" />
    <path d="M8 5q0-2 2-2h5q3 0 3 3v12H8z" fill="#eef4fb" stroke="#3d5680" strokeWidth="1.500" />
    <path d="M4 7q0-2 2-2h4q3 0 3 3v8H4z" fill="#fff" stroke="#3d5680" strokeWidth="1.500" />
    <path d="M3 13h13l1 9H1z" fill="#9bbce2" stroke="#34568c" strokeWidth="1.500" />
    <path d="M17 16l7-4v6l-7 5z" fill="#3c5f95" />
  </svg>
);

const StyleIcon = () => (
  <svg width="25" height="24" viewBox="0 0 25 24">
    <path d="M1 2q4-2 5 2v16q-4 0-5-4z" fill="#8f8fdc" stroke="#4c4c98" />
    <path d="M6 4.500h11v14H6z" fill="#dfe8f4" stroke="#5f779e" />
    <path d="M8 8h6M8 11h4" stroke="#5f779e" />
    <path d="M13.500 11.500h7l3 3v8h-10z" fill="#fff" stroke="#555" />
    <path d="M16 16h5M16 19h5" stroke="#d82828" strokeWidth="2" />
  </svg>
);

const BiblioIcon = () => (
  <svg width="25" height="26" viewBox="0 0 25 26">
    <path d="M13 2h7l4 4v13H13z" fill="url(#paper)" stroke="#4b6490" strokeWidth="1.500" />
    <path d="M4 10h6v14H4z" fill="#7878d8" stroke="#3a3a88" />
    <path d="M10 9q4-3 8-1v14q-3 3-8 2z" fill="#d8ad2c" stroke="#705208" />
    <path d="M5 14h4M11 14h5" stroke="#fff" strokeWidth="2" />
    <Spark x={7} y={7} />
  </svg>
);

const LauncherIcon = () => (
  <svg width="12" height="12" viewBox="0 0 12 12" fill="none" stroke="#8b9099">
    <path d="M.5 9V.5H9M5 5l5 5M10.500 5v5.500H5" />
  </svg>
);

const NoteGlyph = () => (
  <svg width="9" height="18" viewBox="0 0 9 18" fill="none" stroke="#333">
    <path d="M.5.5h5v17h-5z" strokeDasharray="1 2" />
    <path d="M2 2l3 3-2 3 3 2" strokeDasharray="2 1" />
  </svg>
);

/* ---------- data ---------- */

const hNumbers = Array.from({ length: 25 }, (_, i) => (i - 4) * 2);
const vNumbers = Array.from({ length: 23 }, (_, i) => i - 3);
const noteOptions = ["所有脚注", "脚注分隔符", "脚注延续分隔符", "脚注延续标记"];

const ReferencesShot = () => (
  <Shot>
    <ShotFrame>
      <ShotTabs>
        {["大纲", "开始", "插入", "页面布局", "引用", "邮件", "审阅", "视图"].map((t) => (
          <ShotTab key={t} $active={t === "引用"}>{t}</ShotTab>
        ))}
      </ShotTabs>
      <ShotRibbon>
        <ShotGroup $w={118}>
          <ShotBody>
            <ShotList $row={33} $pt={3}>
              <ClipItem><ClippedDoc />添加文字<Arrow size={8} /></ClipItem>
              <ClipItem><ClippedDoc bang />更新目录</ClipItem>
            </ShotList>
          </ShotBody>
          <ShotLabel $start>目录</ShotLabel>
        </ShotGroup>
        <ShotGroup $w={236} $tint>
          <ShotBody $pl={6}>
            <ShotBig $w={78}>
              <ShotIcon><FootnoteIcon /></ShotIcon>
              插入脚注
            </ShotBig>
            <ShotList $row={37} $pt={5} $pl={2}>
              <ShotItem><EndnoteIcon />插入尾注</ShotItem>
              <ShotItem><NextNoteIcon />下一条脚注<Arrow size={8} /></ShotItem>
              <ShotItem $active><NotesIcon />显示备注</ShotItem>
            </ShotList>
          </ShotBody>
          <ShotLabel $pr={30}>
            脚注
            <Launcher aria-label="脚注和尾注"><LauncherIcon /></Launcher>
          </ShotLabel>
        </ShotGroup>
        <ShotGroup $w={273}>
          <ShotBody $pl={6}>
            <ShotBig $w={80}>
              <ShotIcon><CitationIcon /></ShotIcon>
              插入引文
              <Arrow size={8} />
            </ShotBig>
            <ShotList $row={36} $pt={1}>
              <ShotItem><SourcesIcon />管理源</ShotItem>
              <StyleField>
                <StyleIcon />样式:
                <StyleWrap>
                  <StyleSelect defaultValue="APA 第五"><option>APA 第五</option></StyleSelect>
                  <Arrow size={8} />
                </StyleWrap>
              </StyleField>
              <ShotItem><BiblioIcon />书目<Arrow size={8} /></ShotItem>
            </ShotList>
          </ShotBody>
          <ShotLabel>引文与书目</ShotLabel>
        </ShotGroup>
        <ShotBody $pl={9}>
          <ShotBig $w={20}><ShotIcon />插</ShotBig>
        </ShotBody>
      </ShotRibbon>
    </ShotFrame>
    <ShotEnd><ParaMark /></ShotEnd>
  </Shot>
);

const FootnotePane = () => (
  <PaneRow>
    <Pane>
      <ScrollStrip>
        <svg width="8" height="14" viewBox="0 0 8 14"><path d="M8 0v14L0 7z" fill="#444" /></svg>
        <Thumb aria-label="滚动条"><i /><i /><i /><i /></Thumb>
      </ScrollStrip>
      <PaneBar>
        <PaneLabel htmlFor="note-kind">脚注</PaneLabel>
        <Combo>
          <ComboSelect id="note-kind" defaultValue={noteOptions[0]}>
            {noteOptions.map((o) => <option key={o}>{o}</option>)}
          </ComboSelect>
          <ComboArrow><Arrow size={11} color="#333" /></ComboArrow>
          <Menu>
            {noteOptions.map((o, i) => <MenuItem key={o} $selected={i === 1}>{o}</MenuItem>)}
          </Menu>
        </Combo>
      </PaneBar>
      <PaneText>
        <NoteGlyph />
        <Separator />
      </PaneText>
    </Pane>
    <Caret />
    <ParaMark />
  </PaneRow>
);

export default function App() {
  return (
    <Window lang="zh-CN">
      <Global />
      <Defs />
      <Header>
        <TitleBar>
          <QuickBar>
            <QuickButton $w={17} aria-label="Word"><WordIcon /></QuickButton>
            <QuickDivider />
            <QuickButton aria-label="保存"><SaveIcon /></QuickButton>
            <QuickButton aria-label="撤消"><UndoIcon /></QuickButton>
            <QuickButton $w={7} aria-label="撤消列表"><Arrow size={5} color="#111" /></QuickButton>
            <QuickButton $w={28} aria-label="恢复"><RedoIcon /></QuickButton>
            <QuickButton $w={18} aria-label="打印预览"><PreviewIcon /></QuickButton>
            <QuickButton $w={24} aria-label="打开"><OpenIcon /></QuickButton>
            <QuickButton $w={20} aria-label="新建"><NewIcon /></QuickButton>
            <QuickButton $w={24} aria-label="打印"><PrinterIcon /></QuickButton>
            <QuickDivider />
            <QuickButton $w={8} aria-label="自定义"><CustomizeIcon /></QuickButton>
          </QuickBar>
          <Title>文档3&nbsp; -&nbsp; Microsoft Word</Title>
        </TitleBar>
        <Tabs>
          <FileTab>文件</FileTab>
          {["开始", "插入", "页面布局", "引用", "邮件", "审阅", "视图", "WPS PDF"].map((t) => (
            <Tab key={t} $active={t === "视图"}>{t}</Tab>
          ))}
        </Tabs>
      </Header>

      <Ribbon>
        <Group $w={293}>
          <GroupBody>
            <BigButton $w={53} $active><IconBox><PrintLayoutIcon /></IconBox>页面视图</BigButton>
            <BigButton><IconBox><ReadingIcon /></IconBox>阅读版式<br />视图</BigButton>
            <BigButton $w={86}><IconBox><WebIcon /></IconBox>Web 版式视图</BigButton>
            <BigButton $w={50}><IconBox><OutlineIcon /></IconBox>大纲视图</BigButton>
            <BigButton $w={44}><IconBox><DraftIcon /></IconBox>草稿</BigButton>
          </GroupBody>
          <GroupLabel>文档视图</GroupLabel>
        </Group>
        <Group $w={85}>
          <GroupBody $pl={3}>
            <SmallList $pt={0}>
              <CheckRow><Check type="checkbox" defaultChecked />标尺</CheckRow>
              <CheckRow><Check type="checkbox" />网格线</CheckRow>
              <CheckRow><Check type="checkbox" />导航窗格</CheckRow>
            </SmallList>
          </GroupBody>
          <GroupLabel>显示</GroupLabel>
        </Group>
        <Group $w={154}>
          <GroupBody>
            <BigButton><IconBox><MagnifierIcon /></IconBox>显示比例</BigButton>
            <BigButton $w={42}><IconBox><HundredIcon /></IconBox>100%</BigButton>
            <SmallList>
              <SmallButton><PageCountIcon kind="one" />单页</SmallButton>
              <SmallButton><PageCountIcon kind="two" />双页</SmallButton>
              <SmallButton><PageCountIcon kind="width" />页宽</SmallButton>
            </SmallList>
          </GroupBody>
          <GroupLabel>显示比例</GroupLabel>
        </Group>
        <Group $w={326}>
          <GroupBody $pl={5}>
            <BigButton><IconBox><NewWindowIcon /></IconBox>新建窗口</BigButton>
            <BigButton $w={54}><IconBox><ArrangeIcon /></IconBox>全部重排</BigButton>
            <BigButton $w={40}><IconBox><SplitIcon /></IconBox>拆分</BigButton>
            <Divider $m="5px 2px 0 6px" />
            <SmallList>
              <SmallButton><SideIcon />并排查看</SmallButton>
              <SmallButton disabled><SyncIcon />同步滚动</SmallButton>
              <SmallButton disabled><ResetIcon />重设窗口位置</SmallButton>
            </SmallList>
            <Divider $m="5px 4px 0 8px" />
            <BigButton><IconBox><SwitchIcon /></IconBox>切换窗口<Arrow /></BigButton>
          </GroupBody>
          <GroupLabel>窗口</GroupLabel>
        </Group>
        <Group $w={51}>
          <GroupBody>
            <BigButton $w={42}><IconBox><MacroIcon /></IconBox>宏<Arrow /></BigButton>
          </GroupBody>
          <GroupLabel>宏</GroupLabel>
        </Group>
      </Ribbon>

      <Workspace>
        <RulerRow>
          <Corner aria-label="制表符">
            <CornerFace>
              <svg width="6" height="7" viewBox="0 0 6 7"><path d="M1 0v6h5" fill="none" stroke="#333" strokeWidth="2" /></svg>
            </CornerFace>
          </Corner>
          <HRuler>
            <HTrack><HZone $w={180} /><HZone $w={831} /><HZone /></HTrack>
            <HScale>
              {hNumbers.map((n) => (
                <HCell key={n} $sub={n > 0 && n < 40}>
                  <span /><i /><b>{n ? Math.abs(n) : ""}</b><i />
                </HCell>
              ))}
            </HScale>
            <Marker $x={176} $y={-3}><HourGlass /></Marker>
            <Marker $x={1007} $y={4}><RightIndent /></Marker>
          </HRuler>
        </RulerRow>
        <Body>
          <VRuler>
            <VTrack>
              <VScale>
                {vNumbers.map((n) => (
                  <VCell key={n}><b><span>{n ? Math.abs(n) : ""}</span></b><i /></VCell>
                ))}
              </VScale>
            </VTrack>
          </VRuler>
          <PageEdge>
            <Page>
              <CropRow><Crop $side="left" /><Crop $side="right" /></CropRow>
              <TextColumn>
                <Para>
                  第一步点击视图选择大纲视图<Tight $pad={6}>，</Tight>点开始菜单栏中引用－－脚注－－显示备注<Tight $pad={6}>，</Tight>这<br />
                  时在窗口下方自动出现“脚注”窗口，<NoteRef /><ParaMark />
                </Para>
                <ReferencesShot />
                <Para>
                  第二步<Wavy>按下拉</Wavy>按钮<Tight $pad={10}>，</Tight>选择“脚注分隔符”<Tight $pad={8}>，</Tight>如图<Tight $pad={9}>：</Tight>看到的这条线就是脚注中的横<br />
                  线，在这里可以对它进行编辑，按自己的要求进行修改。<ParaMark />
                </Para>
                <FootnotePane />
              </TextColumn>
            </Page>
          </PageEdge>
        </Body>
      </Workspace>
    </Window>
  );
}
